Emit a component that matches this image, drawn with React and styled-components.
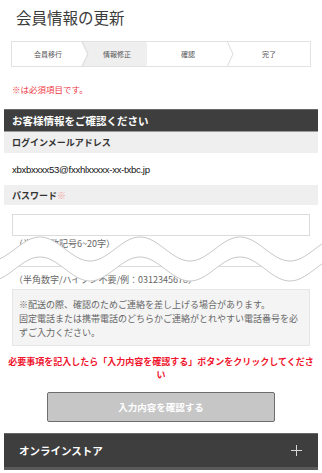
import React from "react";
import styled, { createGlobalStyle } from "styled-components";

const Global = createGlobalStyle`
  html, body { margin: 0; padding: 0; background: #fff; }
  body { font-family: "Noto Sans CJK JP", "Noto Sans", sans-serif; color: #333; }
  * { box-sizing: border-box; }
`;

const Page = styled.div`
  position: relative;
  width: 322px;
  height: 473px;
  overflow: hidden;
  display: flex;
  flex-direction: column;
`;

const Title = styled.h1`
  margin: 7px 0 14px 16px;
  font-size: 15.5px;
  line-height: 20px;
  font-weight: 400;
  color: #3c3c3c;
`;

const StepBar = styled.div`
  display: flex;
  margin: 0 11px;
  height: 26px;
  border: 1px solid #e2e2e2;
`;

const Step = styled.div`
  position: relative;
  flex: 0 0 ${(p) => p.$w}px;
  display: flex;
  align-items: center;
  justify-content: center;
  font-size: 7px;
  color: #555;
  background: ${(p) => (p.$active ? "#efeff0" : "transparent")};
  margin-left: ${(p) => (p.$active ? "-3px" : "0")};
  padding-left: ${(p) => (p.$active ? "6px" : "0")};
  clip-path: ${(p) =>
    p.$active
      ? "polygon(0 0, calc(100% - 1px) 0, calc(100% + 6px) 50%, calc(100% - 1px) 100%, 0 100%, 6px 50%)"
      : "none"};
`;

const Chevron = styled.svg`
  position: absolute;
  top: -1px;
  right: -5px;
  width: 7px;
  height: 26px;
  z-index: 2;
`;

const Required = styled.p`
  margin: 16px 0 14px 12px;
  font-size: 8.5px;
  line-height: 12px;
  color: #ee3a46;
`;

const SectionHead = styled.h2`
  margin: 0 4px;
  height: 23px;
  padding: 0 8px;
  display: flex;
  align-items: center;
  background: #3e3e3e;
  border-top: 1px solid #6a6a6a;
  border-bottom: 1px solid #9a9a9a;
  color: #fff;
  font-size: 10.5px;
  font-weight: 700;
`;

const Label = styled.div`
  margin: 0 4px;
  height: ${(p) => p.$h}px;
  padding: 0 8px;
  display: flex;
  align-items: center;
  background: #efefef;
  font-size: 9px;
  font-weight: 700;
  color: #333;
`;

const Mark = styled.span`
  color: #f39a9a;
  font-weight: 400;
`;

const Value = styled.div`
  height: 32px;
  padding: 0 12px;
  display: flex;
  align-items: center;
  font-size: 9.6px;
  letter-spacing: -0.3px;
  color: #111;
  font-family: "Liberation Sans", sans-serif;
`;

const Field = styled.div`
  margin: ${(p) => p.$mt}px 12px 0;
  height: ${(p) => p.$h}px;
  border: 1px solid #dcdcdc;
  border-top-color: ${(p) => (p.$noTop ? "transparent" : "#dcdcdc")};
  background: #fff;
`;

const Hint = styled.div`
  margin: ${(p) => p.$mt}px 0 0 14px;
  font-size: 9px;
  line-height: 12px;
  color: #666;
`;

const Note = styled.div`
  margin: 3px 12px 0;
  padding: 8px 6px 5px;
  background: #f4f4f4;
  border: 1px solid #e6e6e6;
  font-size: 9px;
  line-height: 14px;
  color: #666;
`;

const Alert = styled.p`
  margin: 9px 0 0;
  text-align: center;
  font-size: 9px;
  line-height: 13px;
  font-weight: 700;
  color: #f0142d;
  white-space: nowrap;
`;

const Submit = styled.button`
  align-self: center;
  margin-top: 11px;
  width: 228px;
  height: 30px;
  background: #c6c6c6;
  border: 1px solid #6e6e6e;
  border-radius: 2px;
  color: #fff;
  font-family: inherit;
  font-size: 9.5px;
  font-weight: 700;
`;

const Footer = styled.div`
  margin: 11px 4px 0;
  height: 37px;
  padding: 0 16px 0 15px;
  display: flex;
  align-items: center;
  justify-content: space-between;
  background: #3e3e3e;
  border-top: 1px solid #666;
  border-bottom: 3px solid #5a5a5a;
  color: #fff;
  font-size: 10.5px;
  font-weight: 700;
`;

const PlusIcon = styled.svg`
  width: 11px;
  height: 11px;
`;

const Wave = styled.svg`
  position: absolute;
  left: 0;
  top: 225px;
  width: 322px;
  height: 65px;
  pointer-events: none;
`;

const steps = [
  { label: "会員移行", w: 72 },
  { label: "情報修正", w: 66, active: true },
  { label: "確認", w: 82 },
  { label: "完了", w: 80 },
];

function wavePaths() {
  const top = [];
  const bot = [];
  for (let x = -2; x <= 324; x += 2) {
    const yt = 24 - 12 * Math.cos((2 * Math.PI * (x - 40)) / 100);
    top.push([x, yt]);
    bot.push([x, yt + 20]);
  }
  const line = (pts) => pts.map((p, i) => `${i ? "L" : "M"}${p[0]},${p[1].toFixed(2)}`).join(" ");
  const fill =
    line(top) +
    " " +
    bot
      .slice()
      .reverse()
      .map((p) => `L${p[0]},${p[1].toFixed(2)}`)
      .join(" ") +
    " Z";
  return { top: line(top), bot: line(bot), fill };
}

export default function App() {
  const w = wavePaths();
  return (
    <Page>
      <Global />
      <Title>会員情報の更新</Title>
      <StepBar>
        {steps.map((s, i) => (
          <Step key={s.label} $w={s.w} $active={s.active}>
            {s.label}
            {i < steps.length - 1 && !s.active && (
              <Chevron viewBox="0 0 7 26">
                <polyline points="0,0 6,13 0,26" fill="none" stroke="#dcdcdc" strokeWidth="1" />
              </Chevron>
            )}
          </Step>
        ))}
      </StepBar>
      <Required>※は必須項目です。</Required>
      <SectionHead>お客様情報をご確認ください</SectionHead>
      <Label $h={21}>ログインメールアドレス</Label>
      <Value>xbxbxxxx53@fxxhlxxxxx-xx-txbc.jp</Value>
      <Label $h={20}>
        パスワード<Mark>※</Mark>
      </Label>
      <Field $mt={9} $h={22} />
      <Hint $mt={2}>（半角英数記号6~20字）</Hint>
      <Field $mt={3} $h={14} $noTop />
      <Hint $mt={7}>（半角数字/ハイフン不要/例：0312345678）</Hint>
      <Note>
        ※配送の際、確認のためご連絡を差し上げる場合があります。
        <br />
        固定電話または携帯電話のどちらかご連絡がとれやすい電話番号を必ずご入力ください。
      </Note>
      <Alert>
        必要事項を記入したら「入力内容を確認する」ボタンをクリックしてくださ
        <br />い
      </Alert>
      <Submit type="button">入力内容を確認する</Submit>
      <Footer>
        オンラインストア
        <PlusIcon viewBox="0 0 11 11">
          <path d="M5.5 0V11M0 5.5H11" stroke="#d8d8d8" strokeWidth="1" />
        </PlusIcon>
      </Footer>
      <Wave viewBox="0 0 322 65">
        <path d={w.fill} fill="#fff" stroke="none" />
        <path d={w.top} fill="none" stroke="#c9c9c9" strokeWidth="1" />
        <path d={w.bot} fill="none" stroke="#c9c9c9" strokeWidth="1" />
      </Wave>
    </Page>
  );
}
